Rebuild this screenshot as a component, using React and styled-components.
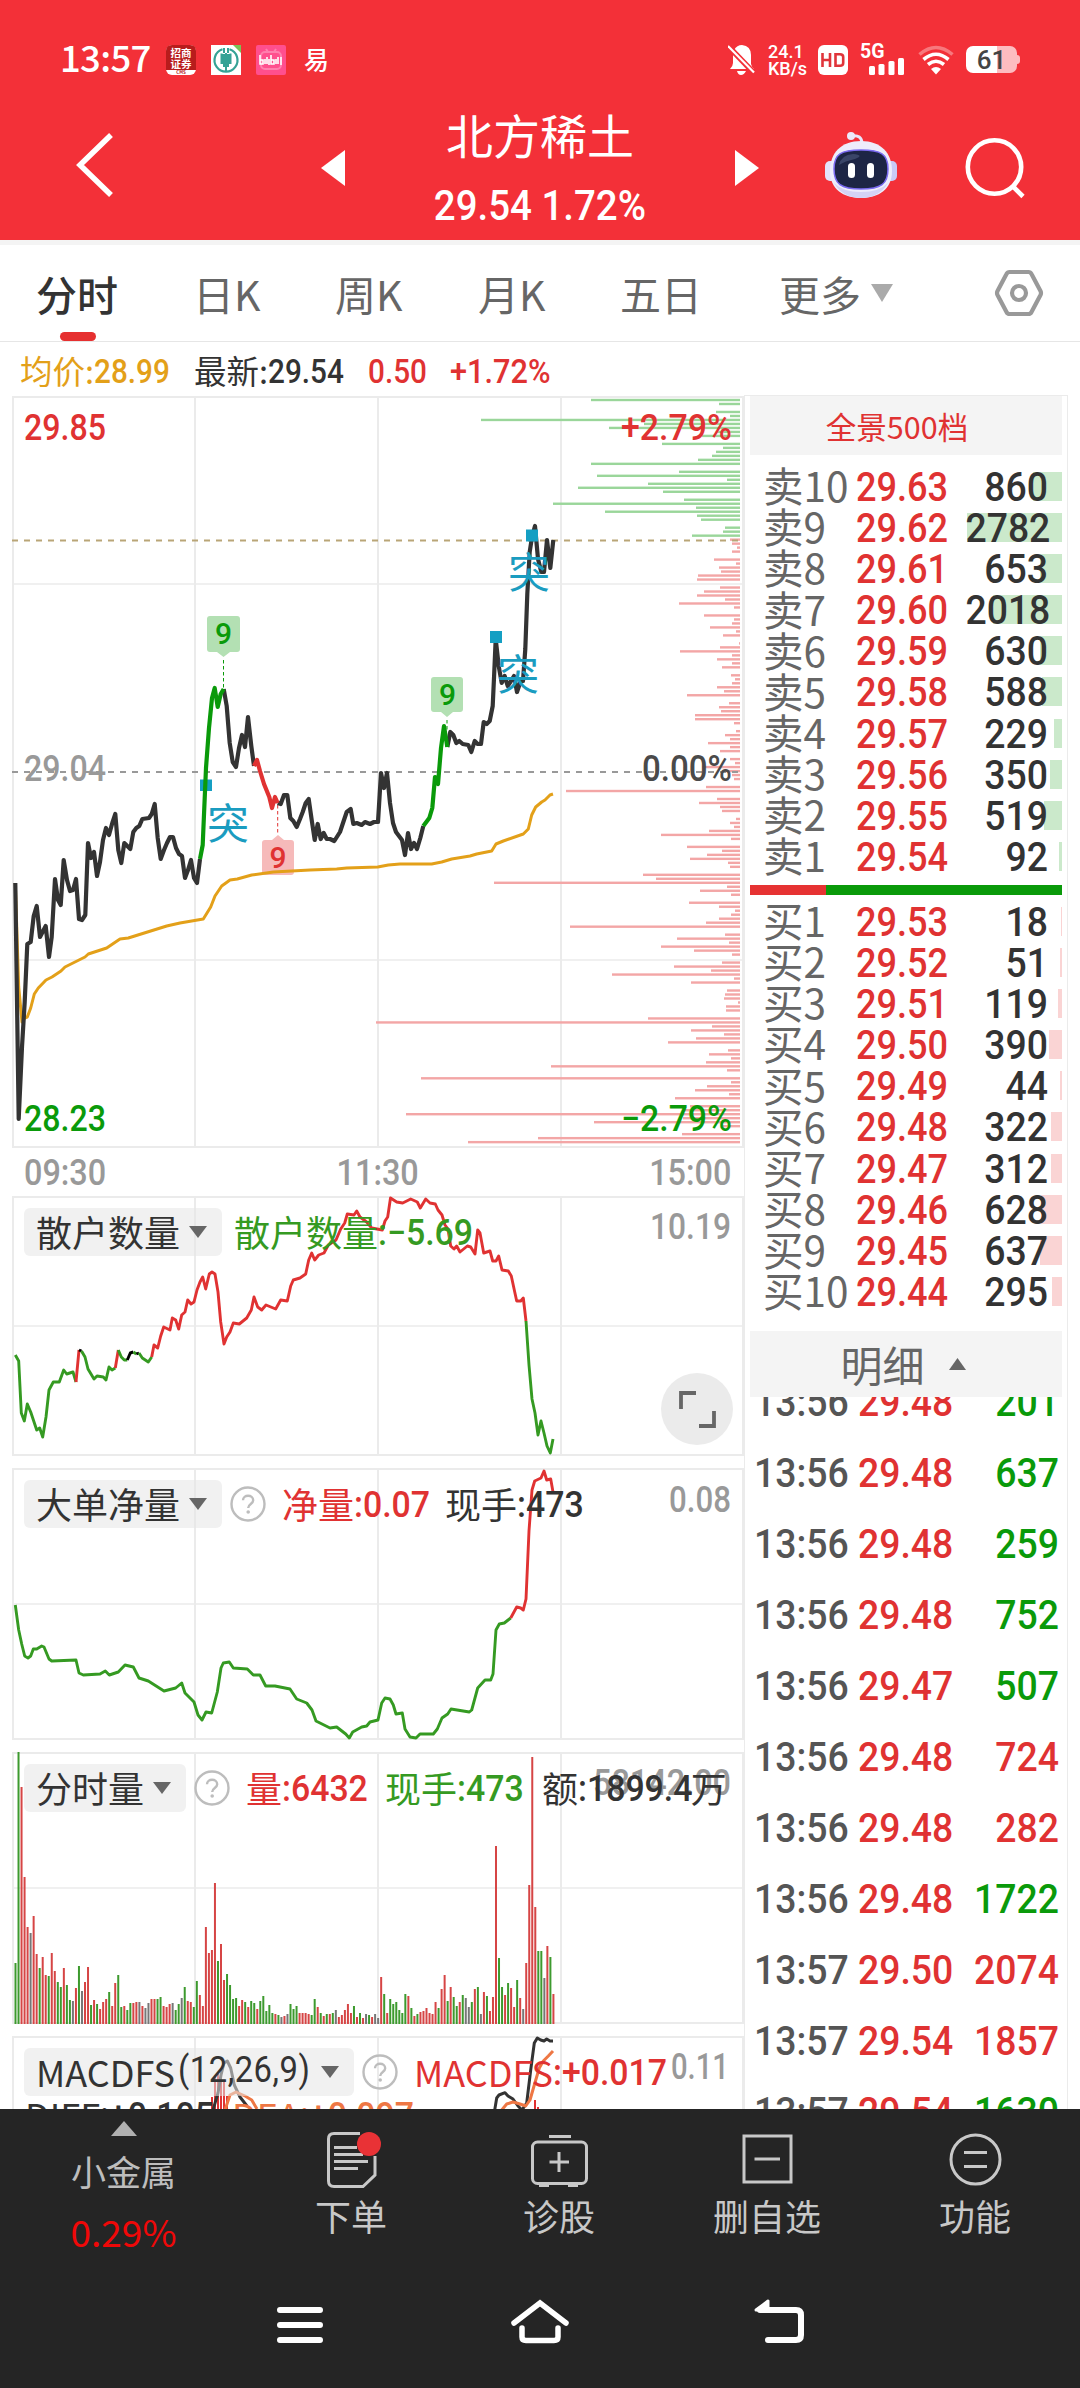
import React from 'react'
import styled, { createGlobalStyle } from 'styled-components'

const red = '#e03232'
const green = '#0a9a0a'
const lineGreen = '#359a22'
const cjk = "'Noto Sans CJK SC', sans-serif"
const din = "Roboto, 'Noto Sans CJK SC', sans-serif"

const tabs = [
    { name: '分时', width: 157, on: true },
    { name: '日K', width: 142 },
    { name: '周K', width: 143 },
    { name: '月K', width: 142 },
    { name: '五日', width: 159 },
    { name: '更多', width: 215, more: true },
]

const sells = [
    ['卖10', '29.63', 860],
    ['卖9', '29.62', 2782],
    ['卖8', '29.61', 653],
    ['卖7', '29.60', 2018],
    ['卖6', '29.59', 630],
    ['卖5', '29.58', 588],
    ['卖4', '29.57', 229],
    ['卖3', '29.56', 350],
    ['卖2', '29.55', 519],
    ['卖1', '29.54', 92],
]

const buys = [
    ['买1', '29.53', 18],
    ['买2', '29.52', 51],
    ['买3', '29.51', 119],
    ['买4', '29.50', 390],
    ['买5', '29.49', 44],
    ['买6', '29.48', 322],
    ['买7', '29.47', 312],
    ['买8', '29.46', 628],
    ['买9', '29.45', 637],
    ['买10', '29.44', 295],
]

const ticks = [
    ['13:56', '29.48', '201', green],
    ['13:56', '29.48', '637', green],
    ['13:56', '29.48', '259', green],
    ['13:56', '29.48', '752', green],
    ['13:56', '29.47', '507', green],
    ['13:56', '29.48', '724', red],
    ['13:56', '29.48', '282', red],
    ['13:56', '29.48', '1722', green],
    ['13:57', '29.50', '2074', red],
    ['13:57', '29.54', '1857', red],
    ['13:57', '29.54', '1630', green],
]

// price line, cut where the nine-turn signal recolours it
const price = [
    ['#333', '15.3,883 18.7,1119 22,1047 24.7,1002 27.3,944 30.7,942 33.7,916 36.7,906 40,937 45.7,926 49,957 51.7,937 55,879 58,900 60.7,905 63.7,860 67,880 70,891 73,890 76,879 79,919 82,920 85.3,915 88,843 91,858 94,852 97,876 100,862 103,840 106,828 109,835 112.3,823 115.3,814 118.3,850 121.3,863 124.3,843 127.3,846 130.3,849 133.3,832 136.3,828 139.3,826 142.3,819 149,818 151.7,814 154.7,804 157.7,838 160.7,859 164,850 167,843 170,837 173,837 176,848 179,854 182,856 185,878 188,870 191,860 194,878 197,883 200,859'],
    ['#333', '223.7,689 226.7,706 229.7,743 232.7,762 236,767 239,748 242,735 245,747 248,717 251.3,746 254,766'],
    ['#333', '277.7,803 280.7,804 284,795 287.3,795 290.3,818 293.3,821 296.7,827 300,819 302.7,812 305.7,803 308.7,799 311.7,820 314.7,840 317.7,824 320.7,839 323.7,833 326.7,839 330,839 334.3,841 340,832 344,820 346.7,812 350.7,809 353.3,824 356.7,823 361.7,825 365,822 370,824 374,822 378,822 381,773 384,788 387,773 390,803 393,823 396,832 402,840 405,855 408,833 411,849 414,843 417,849 420.3,838 423.3,826'],
    ['#333', '447.3,747 450.3,732 453.3,735 456.3,743 459.3,741 462.7,744 468.3,745 471.3,752 474.7,741 477.7,744 481,744 483.7,722 486.7,724 489.7,721 492.7,706 494,678 495.7,639 498.7,666 501.7,683 504.7,676 507.7,686 511,681 514,676 517,692 520.7,681 523,681 525.3,649 527.3,594 529.7,552 532,537 535,526 538,559 541.3,572 544,572 547,540 550.3,568 553.3,540'],
    [green, '200,859 202.7,845 206,768 209,728 212,698 214.7,688 217.7,707 220.7,694 223.7,689'],
    [red, '254,766 257,760 260,771 264,784 269.3,797 272,808 275,797 277.7,803'],
    [green, '423.3,826 429.3,818 432.3,808 435,777 438,784 441,748 444,726 447.3,747'],
]

const average = '15.3,883 18.7,987 22,1022 24.7,1018 27.3,1017 30.7,1008 34.3,994 38.3,988 46,980 52,977 61,971 65,967 85,957 88.3,954 106.7,948 120,939 128.3,938 166.7,926 180,923 203.3,919 210.7,907 215,896 221.7,886 230,880 237.3,879 251.7,875 273.3,872 310,870 336.7,869 346.7,868 377.7,867 388.3,865 400,864 431.7,864 441.7,862 451.7,859 470,856 476.7,854 491.7,851 496,844 503.3,841 523.3,834 528.3,829 531.7,815 535.7,807 541.7,802 545,800 550,795 553,794'

// pending orders per price level, from the top of the chart down
const depth = [
    149, 21, 0, 24, 10, 259, 96, 131, 23, 38, 0, 78, 17, 24, 28, 42, 149, 0, 61, 143, 13, 92, 162, 77, 0,
    56, 187, 44, 135, 43, 39, 0, 15, 17, 48, 10, 8, 3, 8, 0, 26, 4, 21, 19, 42, 43, 0, 20, 36, 43, 15, 61, 6, 0,
    36, 6, 8, 30, 4, 17, 0, 1, 20, 60, 8, 23, 8, 18, 0, 9, 5, 8, 23, 16, 53, 0, 11, 21, 19, 45, 45, 6, 0,
    4, 15, 10, 32, 10, 20, 0, 10, 5, 38, 14, 8, 6, 0, 34, 174, 0, 23, 41, 20, 18, 0, 4, 10, 6, 31, 79, 9, 0,
    53, 18, 33, 50, 12, 10, 0, 97, 84, 246, 13, 40, 9, 0, 51, 21, 5, 9, 21, 34, 170, 0, 15, 63, 11, 79, 46, 8, 0,
    18, 66, 29, 128, 6, 49, 0, 13, 15, 16, 2, 14, 14, 0, 92, 364, 28, 49, 16, 44, 72, 0, 12, 31, 9, 34, 189, 13, 0,
    319, 9, 33, 45, 11, 65, 0, 50, 57, 334, 57, 146, 17, 0, 58, 202, 272,
]

const retail = [
    [lineGreen, '15.3,1355 18.7,1361 21.3,1413 24.3,1421 27.3,1404 30.7,1412 33.7,1421 36.7,1430 39.7,1428 42.7,1437 46,1417 49,1390 53.3,1382 59.3,1382 63.7,1370 66.7,1374 73,1372 76,1382'],
    [red, '76,1382 79,1350'],
    ['#000', '79,1350 81.5,1351'],
    [lineGreen, '81.5,1351 85,1357 88,1369 94,1379 97,1376 103.3,1377 106,1380 109,1367 112,1370 115.3,1368'],
    [red, '115.3,1368 118.3,1350'],
    [lineGreen, '118.3,1350 121.3,1357 124.3,1360 127.3,1360'],
    ['#000', '127.3,1360 130.3,1353 133.3,1352'],
    [lineGreen, '133.3,1352 136.3,1354'],
    ['#000', '136.3,1354 139,1353'],
    [lineGreen, '139,1353 142.3,1358 148.3,1362 151.7,1357'],
    [red, '151.7,1357 154,1345 157.7,1348 160.7,1336 163.7,1327 170,1330 172.3,1318 175.7,1320 178.7,1329 181.7,1315 185,1312 187.7,1300 191,1304 194,1302 197,1290 200,1282 202.7,1277 205.7,1289 209.3,1274 212,1272 215,1274 218,1292 220.7,1322 224,1344 226.7,1337 230,1332 233.3,1323 239.3,1324 246.7,1318 251.3,1310 254,1297 257.7,1307 261.7,1310 266,1305 275.7,1309 280.7,1300 287.3,1301 290.7,1286 293.3,1280 300,1278 305.7,1274 308.7,1260 311.7,1253 314.7,1260 318.7,1255 324,1253 328.3,1245 336,1240 340.7,1229 344.7,1223 347.3,1214 354,1215 356.7,1211 360,1217 366.7,1222 371.7,1228 382.3,1230 385,1221 387.7,1217 390.5,1198 396.7,1202 402.7,1203 410.7,1199 417.3,1202 420.3,1208 425.7,1199 430,1203 435.3,1204 438,1210 442,1215 445,1225 448,1229 450.7,1246 454,1249 456.7,1246 460,1252 467.3,1246 470.7,1247 475,1254 477.7,1230 480,1233 483.7,1253 490,1251 492.7,1261 496,1261 498.7,1256 502,1270 508.3,1271 511.3,1276 514.3,1290 516.7,1301 520.7,1301 523.3,1298 526,1321'],
    [lineGreen, '526,1321 529,1365 532,1399 535,1413 538,1435 541,1421 544,1433 547,1446 550.3,1453 553,1439'],
]

const bigOrders = [
    [lineGreen, '15.3,1605 18.7,1630 21.7,1644 24.7,1656 28,1658 30.7,1656 33.3,1649 36.7,1649 41.7,1646 44,1647 49,1659 51.7,1661 76,1660 79,1673 83.3,1675 100,1674 105.3,1671 109.3,1675 118.3,1672 125,1665 133.3,1667 139,1678 148.3,1681 164,1691 175.7,1688 181.7,1683 185,1693 194,1702 198,1715 202,1720 206,1712 211.7,1713 217.3,1692 221,1668 223.3,1663 229.3,1662 233.3,1668 247.3,1669 253.3,1675 260,1675 265.7,1686 275,1686 290,1689 296.7,1699 306.7,1703 312,1710 316,1721 330,1728 336.7,1727 345.7,1734 349.3,1738 352.7,1732 361.7,1727 366.7,1726 370,1722 378,1720 381.7,1703 385,1698 390,1699 393.3,1705 396,1714 402.3,1713 405,1729 410,1737 416,1738 420,1734 433.3,1734 437.3,1729 442,1718 447.7,1714 451,1709 469.3,1712 471.7,1710 477.7,1688 485,1680 490.7,1680 493,1674 496,1630 499.3,1624 504.3,1623 510.7,1618'],
    [red, '510.7,1618 516.7,1607 520.7,1608 523.3,1610 526,1599 529,1531 532,1490 534.7,1481 541,1478 544,1471 546.7,1480 550.7,1479 553,1492'],
]

// one bar a minute: height and direction (r up, g down, k flat)
const volume = '61g 272g 237r 147r 97r 91k 108r 70r 56g 67r 49r 48g 71r 53r 42g 37g 56r 39g 24g 23k 36r 58g 33k 42r 57r 19g 24r 20g 15r 22r 25r 32g 18r 41r 49g 17g 18r 14g 21g 21r 22r 22k 18r 16k 21k 25r 25r 25g 27g 18r 17r 20r 21k 14g 20g 26k 37g 23r 22r 17g 43g 29r 18r 97r 71r 74r 141r 63g 80r 44r 50g 39g 25g 26g 18r 24r 22g 17r 23g 21g 15r 23g 28g 13g 19g 11g 10r 9g 7k 8r 10k 20g 15g 18g 11r 11r 11r 10r 9g 25g 17r 11g 8r 10g 10r 11g 14k 7r 9r 14r 20r 11r 18g 7r 11g 6r 10k 9g 7r 10k 6k 47r 30g 11r 25g 20g 22g 14g 11g 30g 28r 16g 8r 10g 12r 13r 16r 11r 10r 22r 16g 35r 49r 23g 37r 27g 18g 22r 29g 26k 17k 22g 35r 37g 10k 32r 28g 13r 27r 178r 66g 37g 29r 41g 36r 17r 44g 26r 15k 61r 139r 267r 117r 73g 73g 46k 78r 67g 30r'.split(' ')

const barColors = { r: '#d64545', g: '#3d9a2e', k: '#777' }

const Grid = ({ top, bottom, rows, open }) => (
    <g stroke="#ebebeb" strokeWidth="2">
        <path d={`M12 ${top}H744 M13 ${top}V${bottom} M195 ${top}V${bottom} M378 ${top}V${bottom} M561 ${top}V${bottom} M743 ${top}V${bottom}`} />
        {rows.map(y => <path key={y} d={`M12 ${y}H744`} strokeWidth="1.6" />)}
        {open ? null : <path d={`M12 ${bottom}H744`} />}
    </g>
)

const Lines = ({ parts, width }) => parts.map(([color, points], i) => (
    <polyline key={i} points={points} fill="none" stroke={color} strokeWidth={width} strokeLinejoin="round" />
))

const Axis = ({ x, y, w, color, end, children }) => (
    <AxisText x={x} y={y} fill={color} textAnchor={end ? 'end' : 'start'} textLength={w} lengthAdjust="spacingAndGlyphs">{children}</AxisText>
)

const Help = () => (
    <HelpIcon viewBox="0 0 36 36">
        <circle cx="18" cy="18" r="16.5" fill="none" stroke="#bdbdbd" strokeWidth="2.4" />
        <path d="M13 14.2C13 8.2 23.2 8.2 23.2 14.2C23.2 18 18.2 18 18.2 22" fill="none" stroke="#bdbdbd" strokeWidth="2.4" />
        <circle cx="18.2" cy="26" r="1.8" fill="#bdbdbd" />
    </HelpIcon>
)

const Picker = ({ width, children }) => (
    <PickerBox $width={width}>
        <span>{children}</span>
        <Triangle $w={9} $h={12} $color="#666" />
    </PickerBox>
)

const PriceChart = () => (
    <svg width="744" height="752" viewBox="0 396 744 752">
        <Grid top={397} bottom={1147} rows={[584, 960]} />
        <g>
            {depth.map((len, i) => len ? (
                <rect key={i} x={740 - len} y={398.8 + i * 3.99} width={len} height="2.4" fill={i < 35 ? '#9ad69a' : '#f3a6a6'} />
            ) : null)}
        </g>
        <path d="M12 540.5H740" stroke="#b9a577" strokeWidth="1.8" strokeDasharray="6 6" />
        <path d="M12 772H740" stroke="#999" strokeWidth="1.8" strokeDasharray="6 6" />
        <path d="M210 616h27q3 0 3 3v30q0 3-3 3h-7l-6.500 5l-6.500-5h-7q-3 0-3-3v-30q0-3 3-3z" fill="#b3e0b3" />
        <path d="M434 677h26q3 0 3 3v29q0 3-3 3h-7l-6 5l-6-5h-7q-3 0-3-3v-29q0-3 3-3z" fill="#b3e0b3" />
        <path d="M265 875h26q3 0 3-3v-29q0-3-3-3h-7l-6-5l-6 5h-7q-3 0-3 3v29q0 3 3 3z" fill="#f6baba" />
        <path d="M223.500 660V688M447 720V730" stroke={green} strokeDasharray="3.500 2.500" />
        <path d="M277.700 805V834" stroke={red} strokeDasharray="3.500 2.500" />
        <rect x="200" y="779.500" width="12" height="11.500" fill="#159fc3" />
        <polyline points={average} fill="none" stroke="#e3a019" strokeWidth="3" strokeLinejoin="round" />
        <Lines parts={price} width={4.2} />
        <rect x="490" y="631" width="12" height="12" fill="#159fc3" />
        <rect x="526" y="529.500" width="12" height="12" fill="#159fc3" />
        <Badge x="223.500" y="644" fill={green}>9</Badge>
        <Badge x="447.500" y="704.500" fill={green}>9</Badge>
        <Badge x="278" y="868" fill={red}>9</Badge>
        <Break x="207" y="839">突</Break>
        <Break x="497" y="690">突</Break>
        <Break x="508" y="588">突</Break>
        <Axis x="24" y="439.500" w="82" color={red}>29.85</Axis>
        <Axis x="24" y="780.500" w="82" color="#999">29.04</Axis>
        <Axis x="24" y="1130.500" w="82" color={green}>28.23</Axis>
        <Axis x="732" y="439.500" w="111" color={red} end>+2.79%</Axis>
        <Axis x="732" y="780.500" w="90" color="#4a4a4a" end>0.00%</Axis>
        <Axis x="732" y="1130.500" w="111" color={green} end>−2.79%</Axis>
    </svg>
)

const RetailChart = () => (
    <svg width="744" height="260" viewBox="0 1196 744 260">
        <Grid top={1197} bottom={1455} rows={[1326]} />
        <Lines parts={retail} width={2.9} />
        <Axis x="731" y="1239" w="81" color="#999" end>10.19</Axis>
    </svg>
)

const BigOrderChart = () => (
    <svg width="744" height="272" viewBox="0 1468 744 272">
        <Grid top={1469} bottom={1739} rows={[1604]} />
        <Lines parts={bigOrders} width={2.9} />
        <Axis x="731" y="1511.500" w="62" color="#999" end>0.08</Axis>
    </svg>
)

const VolumeChart = () => (
    <svg width="744" height="272" viewBox="0 1752 744 272">
        <Grid top={1753} bottom={2023} rows={[1888]} />
        {volume.map((v, i) => {
            const h = parseInt(v)
            return <rect key={i} x={14.500 + i * 3.022} y={2024 - h} width="2" height={h} fill={barColors[v.slice(-1)]} />
        })}
        <Axis x="731" y="1795" w="138" color="#999" end>58142.00</Axis>
    </svg>
)

const MacdChart = () => (
    <svg width="744" height="73" viewBox="0 2036 744 73">
        <Grid top={2037} bottom={2110} rows={[]} open />
        <path d="M212 2097V2110M215 2075V2110M218 2074V2110M221 2074V2110M224 2080V2110M227 2096V2110M535 2100V2110M538 2107V2110" stroke={red} strokeWidth="2" />
        <g fill="none" strokeWidth="3" strokeLinejoin="round">
            <path d="M213 2110L218 2093L221 2075L224 2063L227.300 2061L230.700 2068L234.300 2085L240 2097L247 2106M494.700 2110L496.700 2098L499 2095L505 2092.700L508 2096L513 2099L518 2106L522 2110L526.700 2103L530.700 2070L534.300 2043L537.300 2038L540.700 2040L544 2041L546.700 2039L550 2041L553 2041" stroke="#333" />
            <path d="M225 2110L230 2095L236 2092L245 2096L251.700 2100L257 2109M501.700 2110L506.700 2104L513 2102L520 2104L525.700 2106L530 2100L534.300 2085L539.300 2068L543.300 2061L548.300 2056L553 2051" stroke="#ee7744" />
        </g>
        <Axis x="729" y="2079" w="58" color="#999" end>0.11</Axis>
    </svg>
)

const BookRow = ({ row, color }) => (
    <BookLine>
        <BookBar $color={color} style={{ width: Math.round(row[2] / 2782 * 95) }} />
        <BookLabel>{row[0]}</BookLabel>
        <Num $size={41.5} $scale={0.87} $color={red}>{row[1]}</Num>
        <Num $size={41.5} $color="#333" $right>{row[2]}</Num>
    </BookLine>
)

const StatusBar = () => (
    <Status>
        <Clock>13:57</Clock>
        <AppIcon viewBox="0 0 30 30">
            <rect width="30" height="30" rx="6" fill="#fff" />
            <path d="M0 25V6Q0 0 6 0H24Q30 0 30 6V25Z" fill="#b81c1c" />
            <TinyText x="15" y="12" fontSize="10.500" fill="#fff">招商</TinyText>
            <TinyText x="15" y="23" fontSize="10.500" fill="#fff">证券</TinyText>
            <TinyText x="15" y="29.300" fontSize="4.500" fill="#b81c1c">CMS</TinyText>
        </AppIcon>
        <AppIcon viewBox="0 0 30 30">
            <rect width="30" height="30" fill="#fff" />
            <path d="M22 0H30V8Z" fill="#79c257" />
            <path d="M11.500 4.200A11.500 11.500 0 1 0 18.500 4.200" fill="none" stroke="#35a295" strokeWidth="2.200" />
            <path d="M13 3V8M17 3V8M10.500 8.500V18H19.500V8.500M15 8V26M13 18V22M17 18V22" fill="none" stroke="#35a295" strokeWidth="2" />
            <rect x="11" y="9" width="8" height="9" fill="#35a295" />
        </AppIcon>
        <AppIcon viewBox="0 0 30 30">
            <rect width="30" height="30" rx="2" fill="#ff4f8e" />
            <rect x="5" y="7" width="20" height="17" rx="4" fill="none" stroke="#ff7fae" strokeWidth="2" />
            <path d="M10 4L12 7M20 4L18 7" stroke="#ff7fae" strokeWidth="2" />
            <path d="M4 10V19H7V15H4M9 14V19M11 12V19M13 14V20M15 10V19H18V15H15M20 14V19M22 12V19M25 12V20" fill="none" stroke="#fff" strokeWidth="1.600" />
        </AppIcon>
        <Glyph>易</Glyph>
        <StatusIcons>
            <svg width="27" height="31" viewBox="0 0 27 31">
                <path d="M6 6Q9 1 14 1Q23 2 23 11V20Q24 24 26 25H2Q5 22 5 19V10Z" fill="#fff" />
                <path d="M9 27H18Q16 31 13 31Q10 31 9 27Z" fill="#fff" />
                <path d="M1 3L26 29" stroke="#f33038" strokeWidth="5.500" />
                <path d="M0 2L26 28.500" stroke="#fff" strokeWidth="2.200" />
            </svg>
            <Speed><span>24.1</span><span>KB/s</span></Speed>
            <svg width="30" height="30" viewBox="0 0 30 30">
                <rect width="30" height="30" rx="6" fill="#fff" />
                <path d="M4.500 8V22M12 8V22M4.500 15H12M17.500 9.200H22Q25.200 9.200 25.200 12V18Q25.200 20.800 22 20.800H17.500Z" fill="none" stroke="#e0343a" strokeWidth="2.600" />
            </svg>
            <Signal>
                <span>5G</span>
                <svg width="36" height="18" viewBox="0 0 36 18">
                    <g fill="#fff">
                        <rect x="0" y="9" width="6" height="9" rx="1.500" />
                        <rect x="9.500" y="7" width="6" height="11" rx="1.500" />
                        <rect x="19.500" y="4" width="6" height="14" rx="1.500" />
                        <rect x="29" y="1" width="6" height="17" rx="1.500" />
                    </g>
                </svg>
            </Signal>
            <svg width="36" height="30" viewBox="0 0 36 30">
                <g fill="none" stroke="#fff" strokeWidth="3.600">
                    <path d="M1.500 9.500Q18-4.500 34.500 9.500" opacity=".35" />
                    <path d="M5.500 14.500Q18 4 30.500 14.500" />
                    <path d="M10 19.500Q18 13 26 19.500" />
                </g>
                <path d="M13 24Q18 20 23 24L18 29.500Z" fill="#fff" />
            </svg>
            <Battery>
                <b>61</b>
            </Battery>
        </StatusIcons>
    </Status>
)

const Robot = () => (
    <svg width="72" height="68" viewBox="0 0 72 68">
        <path d="M26 5Q37 3 37 13" fill="none" stroke="#e9e6fa" strokeWidth="3" />
        <circle cx="26" cy="5" r="4" fill="#ece9fa" />
        <rect x="0" y="30" width="12" height="20" rx="5" fill="#e3e2fb" />
        <rect x="60" y="30" width="12" height="20" rx="5" fill="#c9caf6" />
        <path d="M36 10C56 10 67 22 67 40C67 58 54 67 36 67C18 67 5 58 5 40C5 22 16 10 36 10Z" fill="#eeedfb" />
        <path d="M9 52Q18 67 36 67Q54 67 63 52Q54 61 36 61Q18 61 9 52Z" fill="#d4d3f5" />
        <path d="M36 19C56 19 63 23 63 38C63 53 56 58 36 58C16 58 9 53 9 38C9 23 16 19 36 19Z" fill="#1d2545" stroke="#7a6af0" strokeWidth="1.500" />
        <path d="M14 34Q16 24 28 23Q40 24 30 28Q20 30 14 34Z" fill="#3a4568" />
        <rect x="23" y="32" width="7" height="15" rx="3.500" fill="#fff" />
        <rect x="42" y="32" width="7" height="15" rx="3.500" fill="#fff" />
    </svg>
)

const App = () => {
    return (
        <>
            <Global />
            <Page>
                <Top>
                    <StatusBar />
                    <Header>
                        <Back width="40" height="68" viewBox="0 0 40 68">
                            <path d="M36 4L5 34L36 64" fill="none" stroke="#fff" strokeWidth="5.500" />
                        </Back>
                        <svg width="24" height="36" viewBox="0 0 24 36"><path d="M0 18L24 0V36Z" fill="#fff" /></svg>
                        <Stock>
                            <StockName>北方稀土</StockName>
                            <Num $size={42} $scale={0.915} $color="#fff" $center>29.54 1.72%</Num>
                        </Stock>
                        <svg width="24" height="36" viewBox="0 0 24 36"><path d="M24 18L0 0V36Z" fill="#fff" /></svg>
                        <RobotButton><Robot /></RobotButton>
                        <svg width="62" height="62" viewBox="0 0 62 62">
                            <circle cx="29.500" cy="30" r="26.700" fill="none" stroke="#fff" strokeWidth="4.600" />
                            <path d="M47.500 49L58 59.500" stroke="#fff" strokeWidth="4.600" />
                        </svg>
                    </Header>
                </Top>
                <Tabs>
                    {tabs.map(tab => (
                        <Tab key={tab.name} $width={tab.width} $on={tab.on}>
                            {tab.name}
                            {tab.more ? <Triangle $w={11} $h={18} $color="#aaa" $gap={10} /> : null}
                        </Tab>
                    ))}
                    <svg width="50" height="48" viewBox="0 0 50 48">
                        <path d="M15.500 3H34.500Q36.500 3 37.500 5L46.500 22Q47.500 24 46.500 26L37.500 43Q36.500 45 34.500 45H15.500Q13.500 45 12.500 43L3.500 26Q2.500 24 3.500 22L12.500 5Q13.500 3 15.500 3Z" fill="none" stroke="#999" strokeWidth="4.200" />
                        <circle cx="25" cy="24" r="7" fill="none" stroke="#999" strokeWidth="4.200" />
                    </svg>
                </Tabs>
                <Main>
                    <Charts>
                        <Quote>
                            <Pair $width={174} $color="#e3a019">均价:<Num $size={33}>28.99</Num></Pair>
                            <Pair $width={174} $color="#333">最新:<Num $size={33}>29.54</Num></Pair>
                            <Pair $width={82} $color={red}><Num $size={33}>0.50</Num></Pair>
                            <Pair $width={110} $color={red}><Num $size={33} $scale={0.93}>+1.72%</Num></Pair>
                        </Quote>
                        <Pane><PriceChart /></Pane>
                        <Times>
                            <Num $size={36} $color="#999">09:30</Num>
                            <Num $size={36} $color="#999" $center>11:30</Num>
                            <Num $size={36} $color="#999" $right>15:00</Num>
                        </Times>
                        <Pane $gap={12}>
                            <RetailChart />
                            <Legend>
                                <Picker width={198}>散户数量</Picker>
                                <Series $left={12} $color={lineGreen}>散户数量<Num $size={36}>:−5.69</Num></Series>
                            </Legend>
                            <FullScreen>
                                <svg width="37" height="37" viewBox="0 0 37 37">
                                    <path d="M2 18V2H17M20 35H35V20" fill="none" stroke="#666" strokeWidth="3.800" />
                                </svg>
                            </FullScreen>
                        </Pane>
                        <Pane $gap={12}>
                            <BigOrderChart />
                            <Legend>
                                <Picker width={198}>大单净量</Picker>
                                <Help />
                                <Series $left={16} $width={163} $color={red}>净量<Num $size={36}>:0.07</Num></Series>
                                <Series $left={0} $color="#333">现手<Num $size={36}>:473</Num></Series>
                            </Legend>
                        </Pane>
                        <Pane $gap={12}>
                            <VolumeChart />
                            <Legend>
                                <Picker width={162}>分时量</Picker>
                                <Help />
                                <Series $left={16} $width={139} $color={red}>量<Num $size={36}>:6432</Num></Series>
                                <Series $left={0} $width={157} $color={lineGreen}>现手<Num $size={36}>:473</Num></Series>
                                <Series $left={0} $color="#333">额<Num $size={36} $pull={9}>:1899.4</Num>万</Series>
                            </Legend>
                        </Pane>
                        <Pane>
                            <MacdChart />
                            <Legend>
                                <Picker width={330}>MACDFS<Wide $size={36} $weight={400} $scale={0.91} $pull={13}>(12,26,9)</Wide></Picker>
                                <Help />
                                <Series $left={16} $color={red}>MACDFS<Num $size={36}>:+0.017</Num></Series>
                            </Legend>
                            <SubLegend>
                                <Series $left={0} $width={207} $color="#333">DIFF<Num $size={36}>:+0.105</Num></Series>
                                <Series $left={0} $color="#ee7744">DEA<Num $size={36}>:+0.097</Num></Series>
                            </SubLegend>
                        </Pane>
                    </Charts>
                    <Side>
                        <Panorama>全景500档</Panorama>
                        <Book $top={11}>
                            {sells.map(row => <BookRow key={row[0]} row={row} color="#cbe9cb" />)}
                        </Book>
                        <Ratio />
                        <Book $top={6}>
                            {buys.map(row => <BookRow key={row[0]} row={row} color="#fad4d4" />)}
                        </Book>
                        <Detail>
                            明细
                            <svg width="17" height="12" viewBox="0 0 17 12"><path d="M8.500 0L17 12H0Z" fill="#666" /></svg>
                        </Detail>
                        <TickWindow>
                            <TickList>
                                {ticks.map((t, i) => (
                                    <Tick key={i}>
                                        <Num $size={41.5} $color="#555">{t[0]}</Num>
                                        <Num $size={41.5} $color={red}>{t[1]}</Num>
                                        <Num $size={41.5} $color={t[3]} $right>{t[2]}</Num>
                                    </Tick>
                                ))}
                            </TickList>
                        </TickWindow>
                    </Side>
                </Main>
                <Bottom>
                    <Sector>
                        <svg width="26" height="15" viewBox="0 0 26 15"><path d="M13 0L26 15H0Z" fill="#b0b0b0" /></svg>
                        <SectorName>小金属</SectorName>
                        <SectorRate>0.29%</SectorRate>
                    </Sector>
                    <Action>
                        <svg width="60" height="56" viewBox="0 0 60 56">
                            <g fill="none" stroke="#c8c8c8" strokeWidth="3">
                                <path d="M39 1.500H13Q7.500 1.500 7.500 7V49Q7.500 54.500 13 54.500H42L54 43V24" />
                                <path d="M13 15.500H36M13 22.500H42M13 29.500H47M13 36.500H37" />
                            </g>
                            <circle cx="48" cy="12" r="12" fill="#e93236" />
                        </svg>
                        <span>下单</span>
                    </Action>
                    <Action>
                        <svg width="60" height="56" viewBox="0 0 60 56">
                            <g fill="none" stroke="#c8c8c8" strokeWidth="3">
                                <path d="M20 4.500H42" />
                                <rect x="3.500" y="10" width="54" height="41.500" rx="5" />
                                <path d="M30 20V40M20.500 30H40" />
                                <path d="M10 53.500H20M39 53.500H49" />
                            </g>
                        </svg>
                        <span>诊股</span>
                    </Action>
                    <Action>
                        <svg width="60" height="56" viewBox="0 0 60 56">
                            <path d="M7 4H54V50H7ZM17.500 27H43" fill="none" stroke="#c8c8c8" strokeWidth="3" />
                        </svg>
                        <span>删自选</span>
                    </Action>
                    <Action>
                        <svg width="60" height="56" viewBox="0 0 60 56">
                            <circle cx="30.500" cy="27.500" r="24.500" fill="none" stroke="#c8c8c8" strokeWidth="3" />
                            <path d="M19 20.500H42M19 34.500H42" stroke="#c8c8c8" strokeWidth="3" />
                        </svg>
                        <span>功能</span>
                    </Action>
                </Bottom>
                <SystemNav>
                    <svg width="60" height="50" viewBox="0 0 60 50">
                        <path d="M10 13H50M10 28H50M10 43H50" stroke="#fff" strokeWidth="6" strokeLinecap="round" />
                    </svg>
                    <svg width="60" height="50" viewBox="0 0 60 50">
                        <path d="M4 26L30 6L56 26" fill="none" stroke="#fff" strokeWidth="5.500" strokeLinecap="round" />
                        <path d="M12 31V40Q12 43.500 16 43.500H44Q48 43.500 48 40V31" fill="none" stroke="#fff" strokeWidth="5.500" strokeLinecap="round" />
                    </svg>
                    <svg width="60" height="50" viewBox="0 0 60 50">
                        <path d="M10 13H46Q51 13 51 18V38Q51 43 46 43H18" fill="none" stroke="#fff" strokeWidth="6" strokeLinecap="round" />
                        <path d="M6 13L18 4V13Z" fill="#fff" stroke="#fff" strokeWidth="3" strokeLinejoin="round" />
                    </svg>
                </SystemNav>
            </Page>
        </>
    )
}

export default App

const Global = createGlobalStyle`
    body {
        margin: 0;
        background-color: #fff;
    }
    svg {
        display: block;
        flex-shrink: 0;
    }
`
const Page = styled.div`
    width: 1080px;
    height: 2388px;
    overflow: hidden;
    display: flex;
    flex-direction: column;
    background-color: #fff;
    font-family: ${cjk};
    font-weight: 400;
`
const Num = styled.span`
    display: inline-block;
    font-family: ${din};
    font-weight: ${p => p.$weight || 500};
    font-size: ${p => p.$size}px;
    line-height: 1;
    white-space: pre;
    color: ${p => p.$color || 'inherit'};
    transform: scaleX(${p => p.$scale || 0.9});
    transform-origin: ${p => p.$right ? 'right' : p.$center ? 'center' : 'left'};
    text-align: ${p => p.$right ? 'right' : 'left'};
    margin-right: -${p => p.$pull || 0}px;
`
const Wide = styled(Num)`
    letter-spacing: .6px;
    margin-left: 3px;
`
const Triangle = styled.i`
    border-left: ${p => p.$w}px solid transparent;
    border-right: ${p => p.$w}px solid transparent;
    border-top: ${p => p.$h}px solid ${p => p.$color};
    margin-left: ${p => p.$gap || 0}px;
`
const Top = styled.div`
    height: 240px;
    background-color: #f33038;
    border-bottom: 5px solid #f4f4f4;
    flex-shrink: 0;
`
const Status = styled.div`
    height: 119px;
    padding: 0 60px;
    display: flex;
    align-items: center;
    color: #fff;
`
const Clock = styled.div`
    width: 106px;
    font-size: 36.5px;
    font-weight: 500;
    line-height: 1;
    padding-bottom: 5px;
    letter-spacing: -.7px;
`
const AppIcon = styled.svg`
    width: 30px;
    height: 30px;
    margin-right: 15px;
`
const TinyText = styled.text`
    font-family: ${cjk};
    font-weight: 700;
    text-anchor: middle;
`
const Glyph = styled.div`
    font-size: 25px;
    font-weight: 500;
    line-height: 1;
    margin-left: 3px;
    padding-bottom: 3px;
`
const StatusIcons = styled.div`
    margin-left: auto;
    display: flex;
    align-items: center;
`
const Speed = styled.div`
    width: 50px;
    margin-left: 13px;
    display: flex;
    flex-direction: column;
    font-family: ${din};
    font-size: 18px;
    font-weight: 500;
    line-height: 17px;
`
const Signal = styled.div`
    width: 45px;
    height: 30px;
    margin: 0 13px 0 12px;
    display: flex;
    flex-direction: column;
    font-family: ${din};
    font-size: 19.5px;
    font-weight: 700;
    line-height: 14px;

    svg {
        margin: -2px 0 0 9px;
    }
`
const Battery = styled.div`
    width: 51px;
    height: 27px;
    margin-left: 12px;
    margin-right: 3px;
    border-radius: 7px;
    background: linear-gradient(90deg, #fff 61%, #fdbcc0 61%);
    position: relative;
    display: flex;
    align-items: center;
    justify-content: center;

    b {
        font-family: ${din};
        font-size: 26px;
        font-weight: 500;
        line-height: 1;
        color: #444;
    }

    &::after {
        content: "";
        position: absolute;
        right: -3px;
        top: 9px;
        width: 3px;
        height: 9px;
        border-radius: 0 3px 3px 0;
        background-color: #fdbcc0;
    }
`
const Header = styled.div`
    height: 97px;
    padding-left: 75px;
    display: flex;
    align-items: center;
`
const Back = styled.svg`
    margin: -6px 206px 0 0;
`
const Stock = styled.div`
    width: 390px;
    height: 97px;
    display: flex;
    flex-direction: column;
    align-items: center;
`
const StockName = styled.div`
    font-size: 47px;
    font-weight: 400;
    line-height: 47px;
    color: #fff;
    margin-top: -9px;
    padding-bottom: 28px;
`
const RobotButton = styled.div`
    margin: -5px 68px 0 66px;
`
const Tabs = styled.div`
    height: 96px;
    border-bottom: 1px solid #e6e6e6;
    padding-left: 36px;
    display: flex;
    align-items: center;
    flex-shrink: 0;
`
const Tab = styled.div`
    width: ${p => p.$width}px;
    height: 96px;
    display: flex;
    align-items: center;
    font-size: 41px;
    font-weight: ${p => p.$on ? 500 : 400};
    color: ${p => p.$on ? '#333' : '#666'};
    position: relative;

    &::after {
        content: "";
        display: ${p => p.$on ? 'block' : 'none'};
        position: absolute;
        left: 24px;
        bottom: 0;
        width: 36px;
        height: 9px;
        border-radius: 5px;
        background-color: #e63030;
    }
`
const Main = styled.div`
    height: 1767px;
    display: flex;
    align-items: flex-start;
    overflow: hidden;
    flex-shrink: 0;
`
const Charts = styled.div`
    width: 744px;
`
const Quote = styled.div`
    height: 51px;
    padding: 3px 0 0 20px;
    display: flex;
    align-items: center;

    ${Num} {
        margin-top: 1px;
    }
`
const Pair = styled.div`
    width: ${p => p.$width}px;
    display: flex;
    align-items: center;
    font-size: 32.5px;
    line-height: 1;
    white-space: nowrap;
    color: ${p => p.$color};
`
const Pane = styled.div`
    position: relative;
    margin-bottom: ${p => p.$gap || 0}px;
`
const AxisText = styled.text`
    font-family: ${din};
    font-size: 36px;
    font-weight: 500;
`
const Badge = styled.text`
    font-family: ${din};
    font-size: 30px;
    font-weight: 500;
    text-anchor: middle;
`
const Break = styled.text`
    font-family: ${cjk};
    font-size: 42px;
    font-weight: 400;
    fill: #1a9cc0;
`
const Times = styled.div`
    height: 46px;
    padding: 2px 13px 0 24px;
    display: flex;
    align-items: center;
    justify-content: space-between;
`
const Legend = styled.div`
    position: absolute;
    left: 24px;
    top: 12px;
    height: 48px;
    display: flex;
    align-items: center;
`
const SubLegend = styled.div`
    position: absolute;
    left: 25px;
    top: 58px;
    display: flex;
    align-items: center;
`
const PickerBox = styled.div`
    width: ${p => p.$width}px;
    height: 48px;
    box-sizing: border-box;
    padding: 0 15px 0 12px;
    border-radius: 6px;
    background-color: rgba(229, 229, 229, .55);
    display: flex;
    align-items: center;
    justify-content: space-between;
    font-size: 36px;
    line-height: 1;
    white-space: nowrap;
    color: #333;

    span {
        display: flex;
        align-items: center;
        padding-bottom: 2px;
    }
`
const HelpIcon = styled.svg`
    width: 36px;
    height: 36px;
    margin-left: 8px;
`
const Series = styled.div`
    width: ${p => p.$width ? p.$width + 'px' : 'auto'};
    margin-left: ${p => p.$left}px;
    padding-bottom: 3px;
    display: flex;
    align-items: center;
    font-size: 36px;
    line-height: 1;
    white-space: nowrap;
    color: ${p => p.$color};

    ${Num} {
        transform: scaleX(.94);
        margin-top: 4px;
    }
`
const FullScreen = styled.div`
    position: absolute;
    left: 661px;
    top: 177px;
    width: 72px;
    height: 72px;
    border-radius: 50%;
    background-color: #ebebeb;
    display: flex;
    align-items: center;
    justify-content: center;
`
const Side = styled.div`
    width: 324px;
    height: 1715px;
    margin-top: 53px;
    box-sizing: border-box;
    border: 1px solid #ebebeb;
    padding: 0 5px;
`
const Panorama = styled.div`
    height: 59px;
    padding-right: 18px;
    display: flex;
    align-items: center;
    justify-content: center;
    background-color: #f4f4f4;
    font-size: 30.5px;
    line-height: 56px;
    color: ${red};
`
const Book = styled.div`
    padding-top: ${p => p.$top}px;
`
const BookLine = styled.div`
    height: 41.1px;
    padding: 0 14px 0 13px;
    display: grid;
    grid-template-columns: 93px 100px 1fr;
    align-items: center;
    position: relative;

    span {
        position: relative;
    }
`
const BookBar = styled.div`
    position: absolute;
    right: 0;
    top: 6px;
    height: 29px;
    background-color: ${p => p.$color};
`
const BookLabel = styled.span`
    font-size: 40.5px;
    line-height: 37px;
    height: 41px;
    color: #666;
    white-space: nowrap;
`
const Ratio = styled.div`
    height: 10px;
    margin-top: 8px;
    background: linear-gradient(90deg, #e63232 76px, ${green} 76px);
`
const Detail = styled.div`
    height: 66px;
    margin-top: 19px;
    padding-right: 6px;
    display: flex;
    align-items: center;
    justify-content: center;
    gap: 24px;
    background-color: #f4f4f4;
    font-size: 42px;
    color: #666;
`
const TickWindow = styled.div`
    height: 714px;
    overflow: hidden;
`
const TickList = styled.div`
    margin-top: -31px;
`
const Tick = styled.div`
    height: 71px;
    padding: 0 3px 0 4px;
    display: grid;
    grid-template-columns: 104px 100px 1fr;
    align-items: center;
`
const Bottom = styled.div`
    height: 159px;
    display: grid;
    grid-template-columns: 247px repeat(4, 208px);
    background-color: #252525;
    flex-shrink: 0;
`
const Sector = styled.div`
    padding-top: 12px;
    display: flex;
    flex-direction: column;
    align-items: center;
`
const SectorName = styled.div`
    margin-top: 17px;
    font-size: 35px;
    line-height: 36px;
    color: #bdbdbd;
`
const SectorRate = styled.div`
    margin-top: 22px;
    font-size: 37px;
    line-height: 40px;
    color: #f00808;
`
const Action = styled.div`
    padding-top: 23px;
    display: flex;
    flex-direction: column;
    align-items: center;

    span {
        margin-top: 7px;
        font-size: 36px;
        line-height: 40px;
        color: #c8c8c8;
    }
`
const SystemNav = styled.div`
    height: 120px;
    padding: 29px 270px 0;
    display: flex;
    justify-content: space-between;
    background-color: #252525;
    flex-shrink: 0;
    flex-grow: 1;
`
